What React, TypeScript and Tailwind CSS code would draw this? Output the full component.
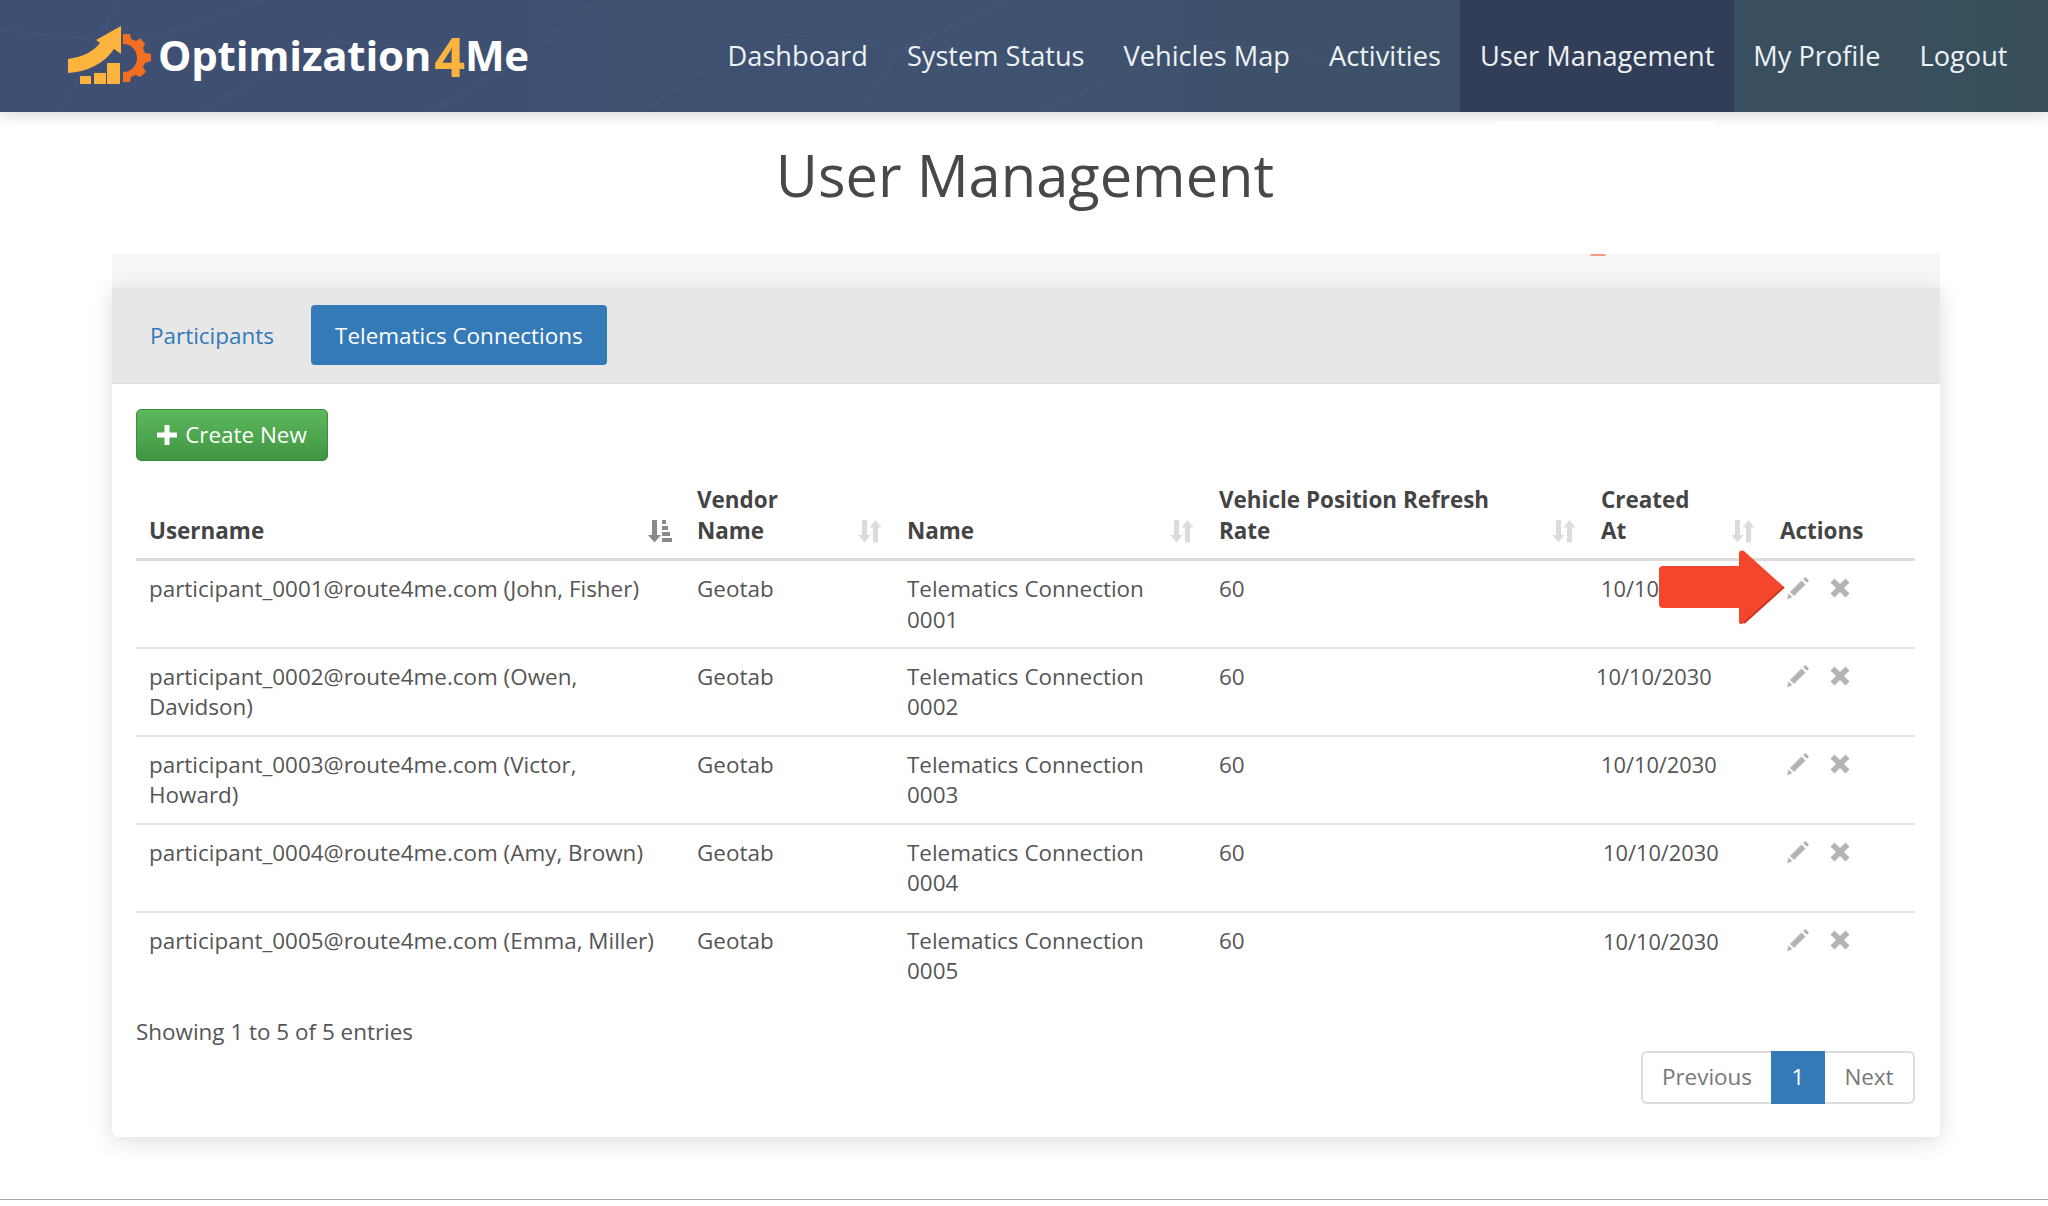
const font = { fontFamily: '"Open Sans", sans-serif' }

const navItems = ['Dashboard', 'System Status', 'Vehicles Map', 'Activities', 'User Management', 'My Profile', 'Logout']

const rows = [
  { user: 'participant_0001@route4me.com (John, Fisher)', conn: '0001', dateClass: 'pl-[13px] pt-[13px]' },
  { user: 'participant_0002@route4me.com (Owen, Davidson)', conn: '0002', dateClass: 'pl-[8px] pt-[13px]' },
  { user: 'participant_0003@route4me.com (Victor, Howard)', conn: '0003', dateClass: 'pl-[13px] pt-[13px]' },
  { user: 'participant_0004@route4me.com (Amy, Brown)', conn: '0004', dateClass: 'pl-[15px] pt-[13px]' },
  { user: 'participant_0005@route4me.com (Emma, Miller)', conn: '0005', dateClass: 'pl-[15px] pt-[14px]' },
]

function Logo() {
  return (
    <svg width="84" height="60" viewBox="0 0 84 60" className="shrink-0">
      <path d="M0 33 C14 31 25 26 32 17 L28 14 L53 0 L53 28 L46 23 C36 38 18 46 0 47 Z" fill="#fdb43f" />
      <rect x="12" y="50" width="11" height="8" fill="#fdb43f" />
      <rect x="26" y="47" width="12" height="11" fill="#fdb43f" />
      <rect x="39" y="37" width="13" height="21" fill="#fdb43f" />
      <path
        d="M55 8 L62 8 L63 13 L68 15 L72 12 L77 18 L75 22 L77 27 L83 28 L83 35 L77 37 L75 41 L78 46 L72 51 L68 49 L63 51 L62 56 L55 56 L55 46 C63 46 69 40 69 32 C69 24 63 18 55 18 Z"
        fill="#f26f21"
      />
    </svg>
  )
}

function SortIcon({ active }: { active?: boolean }) {
  if (active) {
    return (
      <svg width="24" height="24" viewBox="0 0 24 24" className="shrink-0 mb-[3px]" fill="#8a8a8a">
        <path d="M4 1h5v15h4l-6.5 7.5L0 16h4z" />
        <rect x="14" y="1" width="4" height="4" />
        <rect x="14" y="7" width="6" height="4" />
        <rect x="14" y="13" width="8" height="4" />
        <rect x="14" y="19" width="10" height="4" />
      </svg>
    )
  }
  return (
    <svg width="24" height="24" viewBox="0 0 24 24" className="shrink-0 mb-[3px]" fill="#dcdcdc">
      <path d="M4 1h5v15h3.500L6.500 23.500 0.500 16H4z" />
      <path d="M15 23.500h5V8.500h3.500L17.500 1 11.500 8.500H15z" />
    </svg>
  )
}

function Pencil() {
  return (
    <svg width="24" height="24" viewBox="0 0 24 24" fill="#b4b4b4">
      <path d="M1 23 L2.500 17.500 L6.500 21.500 Z" />
      <path d="M4 16 L15.500 4.500 L19.500 8.500 L8 20 Z" />
      <path d="M17 3 L19.500 1 L23 4.500 L21 7 Z" />
    </svg>
  )
}

function Cross() {
  return (
    <svg width="20" height="20" viewBox="0 0 20 20" fill="#b4b4b4">
      <path d="M4.500 0.500 L10 6 L15.500 0.500 L19.500 4.500 L14 10 L19.500 15.500 L15.500 19.500 L10 14 L4.500 19.500 L0.500 15.500 L6 10 L0.500 4.500 Z" />
    </svg>
  )
}

function Header({ label, icon, active }: { label: React.ReactNode; icon?: boolean; active?: boolean }) {
  return (
    <th className="pl-[13px] pr-[12px] pb-[12px] align-bottom text-left font-bold text-[#444] border-b-[3px] border-[#ddd] leading-[30.500px]">
      <div className="flex items-end justify-between">
        <span>{label}</span>
        {icon && <SortIcon active={active} />}
      </div>
    </th>
  )
}

export default function App() {
  return (
    <div style={font} className="relative h-[1206px] w-[2048px] overflow-hidden bg-white text-[22.450px] text-[#555]">
      <nav className="relative z-10 flex h-[112px] items-stretch justify-between bg-gradient-to-r from-[#3e4f73] via-[#3f5270] to-[#374e5a] pl-[68px] pr-[21px] shadow-[0_4px_14px_rgba(0,0,0,0.14)]">
        {/* faint street map behind the bar */}
        <svg width="1400" height="112" viewBox="0 0 1400 112" fill="none" stroke="white" strokeOpacity="0.025" strokeWidth="2" className="absolute left-0 top-0">
          <path d="M0 30 L140 44 L260 0 M60 112 L120 0 M200 112 L330 40 L520 60 L600 0 M430 112 L520 60 M640 112 L760 30 L900 50 L1010 0 M860 112 L900 50 M1040 112 L1200 40 L1400 70" />
        </svg>
        <div className="relative flex items-center gap-[6px]">
          <Logo />
          <div className="mb-[4px] flex items-baseline font-bold text-white text-[42px] tracking-[-0.2px]">
            <span>Optimization</span>
            <span className="relative top-[6px] ml-[3px] text-[54px] leading-none text-[#fdb43f]">4</span>
            <span>Me</span>
          </div>
        </div>
        <ul className="relative flex items-stretch">
          {navItems.map((item) => (
            <li
              key={item}
              className={`flex items-center px-[19.500px] text-[27.200px] text-[#eef1f4] ${
                item === 'User Management' ? 'bg-[#323e57]' : ''
              }`}
            >
              {item}
            </li>
          ))}
        </ul>
      </nav>

      <div className="absolute left-[1497px] top-[121px] z-20 h-[14px] w-[219px] bg-white" />

      <h1 className="ml-[2px] mt-[25px] text-center text-[57.800px] leading-[76px] text-[#484848]">User Management</h1>

      <div className="relative mx-[112px] mt-[41px] h-[883px] w-[1828px] rounded-b-[6px]">
        <div className="absolute left-[1478px] top-0 h-[2px] w-[16px] rounded-t bg-[#f59b86]" />
        <div className="h-[34px] bg-[#f6f6f6]" />
        <div className="flex h-[849px] flex-col rounded-b-[6px] bg-white shadow-[0_4px_22px_rgba(0,0,0,0.14)]">
          <div className="flex h-[96px] items-start gap-[14px] border-b border-[#dcdcdc] bg-[#e7e7e7] pl-[15px] pt-[17px]">
            <a className="flex h-[60px] items-center px-[23px] pt-[2px] text-[#337ab7]">Participants</a>
            <a className="flex h-[60px] w-[296px] items-center justify-center rounded-[4px] bg-[#337ab7] pt-[2px] text-white">
              Telematics Connections
            </a>
          </div>

          <div className="flex flex-1 flex-col px-[24px] pt-[25px]">
            <button className="flex h-[52px] w-[192px] items-center justify-center gap-[8px] rounded-[5px] border border-[#3d8b3d] bg-gradient-to-b from-[#5cb85c] to-[#419641] text-white">
              <svg width="20" height="20" viewBox="0 0 20 20" fill="white">
                <path d="M7.500 0h5v7.500H20v5h-7.500V20h-5v-7.500H0v-5h7.500z" />
              </svg>
              Create New
            </button>

            <table className="mt-[24px] w-[1779px] table-fixed border-collapse">
              <colgroup>
                <col className="w-[548px]" />
                <col className="w-[210px]" />
                <col className="w-[312px]" />
                <col className="w-[382px]" />
                <col className="w-[179px]" />
                <col className="w-[148px]" />
              </colgroup>
              <thead>
                <tr>
                  <Header label="Username" icon active />
                  <Header label={<>Vendor<br />Name</>} icon />
                  <Header label="Name" icon />
                  <Header label={<>Vehicle Position Refresh<br />Rate</>} icon />
                  <Header label={<>Created<br />At</>} icon />
                  <Header label="Actions" />
                </tr>
              </thead>
              <tbody>
                {rows.map((row, i) => (
                  <tr key={row.conn} className={`h-[88px] align-top leading-[30.500px] ${i < 4 ? 'border-b-2 border-[#e4e4e4]' : ''}`}>
                    <td className="px-[13px] pt-[13px]">{row.user}</td>
                    <td className="px-[13px] pt-[13px]">Geotab</td>
                    <td className="px-[13px] pt-[13px]">Telematics Connection {row.conn}</td>
                    <td className="px-[13px] pt-[13px]">60</td>
                    <td className={`text-[21.800px] ${row.dateClass}`}>10/10/2030</td>
                    <td className="pl-[19px] pt-[15px]">
                      <div className="flex items-center gap-[20px]">
                        <Pencil />
                        <Cross />
                      </div>
                    </td>
                  </tr>
                ))}
              </tbody>
            </table>

            <div className="mt-[17px] leading-[30px]">Showing 1 to 5 of 5 entries</div>

            <div className="mr-[1px] mt-[4px] flex justify-end">
              <div className="flex h-[53px] items-stretch">
                <span className="flex w-[130px] items-center justify-center rounded-l-[6px] border-2 border-r-0 border-[#ddd] text-[#777]">Previous</span>
                <span className="flex w-[54px] items-center justify-center bg-[#337ab7] text-white">1</span>
                <span className="flex w-[90px] items-center justify-center rounded-r-[6px] border-2 border-l-0 border-[#ddd] text-[#777]">Next</span>
              </div>
            </div>
          </div>
        </div>
      </div>

      {/* red callout arrow from the original annotation */}
      <svg width="130" height="78" viewBox="0 0 130 78" className="absolute left-[1658px] top-[549px] z-20">
        <path
          d="M5 17 H81 V5 Q81 0 86 2 L126 38 L86 74 Q81 77 81 72 V59 H5 Q1 59 1 55 V21 Q1 17 5 17 Z"
          fill="#f4462c"
        />
        <path d="M126 38 L86 74" stroke="#c9351f" strokeWidth="2" fill="none" />
      </svg>

      <div className="absolute left-0 top-[1199px] h-[1px] w-full bg-[#aaaaaa]" />
    </div>
  )
}
